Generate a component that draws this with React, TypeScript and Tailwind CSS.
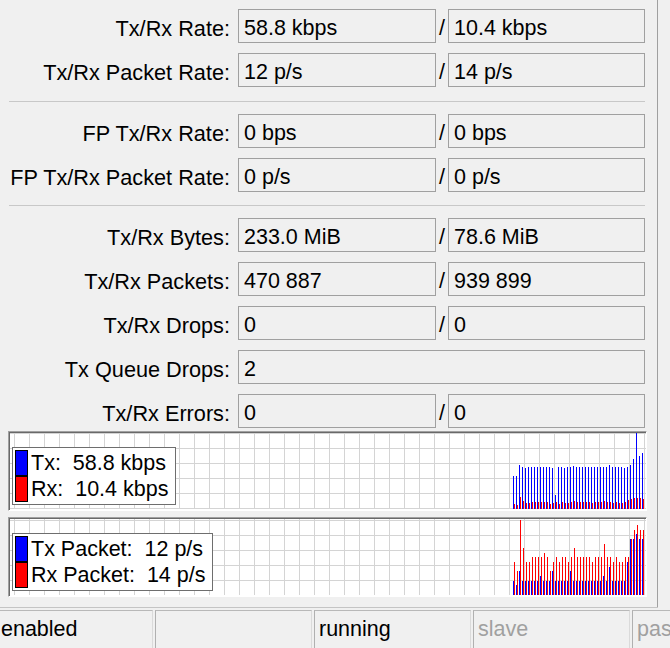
import type { ReactNode } from 'react'

type Row = { label: string; tx: string; rx?: string }

const section1: Row[] = [
  { label: 'Tx/Rx Rate:', tx: '58.8 kbps', rx: '10.4 kbps' },
  { label: 'Tx/Rx Packet Rate:', tx: '12 p/s', rx: '14 p/s' },
]

const section2: Row[] = [
  { label: 'FP Tx/Rx Rate:', tx: '0 bps', rx: '0 bps' },
  { label: 'FP Tx/Rx Packet Rate:', tx: '0 p/s', rx: '0 p/s' },
]

const section3: Row[] = [
  { label: 'Tx/Rx Bytes:', tx: '233.0 MiB', rx: '78.6 MiB' },
  { label: 'Tx/Rx Packets:', tx: '470 887', rx: '939 899' },
  { label: 'Tx/Rx Drops:', tx: '0', rx: '0' },
  { label: 'Tx Queue Drops:', tx: '2' },
  { label: 'Tx/Rx Errors:', tx: '0', rx: '0' },
]

// bar heights in px, one sample every 3px
const rateTx = [33, 33, 44, 42, 41, 42, 42, 42, 42, 42, 42, 42, 42, 41, 14, 42, 42, 41, 42, 42, 43, 42, 42, 42, 42, 42, 42, 42, 42, 42, 42, 42, 44, 42, 42, 42, 42, 41, 42, 44, 50, 76, 53, 56]
const rateRx = [5, 4, 12, 8, 6, 6, 7, 7, 7, 7, 7, 7, 5, 6, 7, 5, 7, 6, 6, 7, 8, 7, 7, 7, 7, 7, 6, 7, 7, 7, 8, 7, 7, 6, 7, 6, 6, 7, 9, 10, 11, 11, 11, 10]
const pktTx = [14, 10, 24, 14, 14, 14, 14, 14, 14, 19, 14, 14, 14, 24, 14, 14, 14, 14, 14, 24, 14, 14, 14, 14, 14, 14, 14, 14, 14, 14, 19, 14, 28, 14, 14, 14, 14, 14, 33, 56, 56, 61, 56, 56]
const pktRx = [33, 24, 75, 47, 33, 33, 38, 38, 38, 38, 42, 38, 24, 33, 38, 33, 38, 38, 33, 38, 47, 38, 38, 38, 38, 38, 33, 38, 38, 38, 51, 38, 38, 33, 38, 33, 33, 38, 38, 56, 65, 70, 65, 65]

function Field({ value, wide }: { value: string; wide?: boolean }) {
  return (
    <div
      className={`${wide ? 'w-[407px]' : 'w-[198px]'} h-[34px] shrink-0 border border-[#a0a0a0] pl-[5px] pt-[6px] flex items-center whitespace-nowrap overflow-hidden`}
    >
      {value}
    </div>
  )
}

function StatRow({ row }: { row: Row }) {
  return (
    <div className="flex items-center h-[34px]">
      <div className="w-[230px] h-[34px] pt-[6px] shrink-0 flex items-center justify-end whitespace-nowrap text-[21.7px]">
        {row.label}
      </div>
      <div className="w-[8px] shrink-0" />
      {row.rx === undefined ? (
        <Field value={row.tx} wide />
      ) : (
        <>
          <Field value={row.tx} />
          <div className="w-[12px] h-[34px] pt-[6px] shrink-0 flex items-center justify-center">/</div>
          <div className="w-[197px] h-[34px] shrink-0 border border-[#a0a0a0] pl-[5px] pt-[6px] flex items-center whitespace-nowrap">
            {row.rx}
          </div>
        </>
      )}
    </div>
  )
}

function Rows({ rows }: { rows: Row[] }) {
  return (
    <div className="flex flex-col gap-[10px]">
      {rows.map((r) => (
        <StatRow key={r.label} row={r} />
      ))}
    </div>
  )
}

function Legend({ children }: { children: ReactNode }) {
  return (
    <div className="absolute left-[2px] top-[14px] border border-[#6e6e6e] bg-white p-[2px] pr-[7px] flex flex-col">
      {children}
    </div>
  )
}

function LegendRow({ color, text }: { color: string; text: string }) {
  return (
    <div className="flex items-center h-[26px]">
      <div className={`w-[13px] h-[26px] border border-black ${color}`} />
      <span className="ml-[3px] pt-[2px] whitespace-pre">{text}</span>
    </div>
  )
}

function Graph({ tx, rx, gridOffset, legend }: { tx: number[]; rx: number[]; gridOffset: number; legend: ReactNode }) {
  const w = 636
  const h = 76
  const vx: number[] = []
  for (let x = 4; x < w; x += 15) vx.push(x)
  const hy: number[] = []
  for (let y = gridOffset; y < h; y += 15) hy.push(y)

  return (
    <div className="ml-[8px] w-[639px] h-[80px] border border-t-[#a0a0a0] border-l-[#a0a0a0] border-r-white border-b-white">
      <div className="relative h-full border-t border-l border-[#696969] bg-white overflow-hidden">
        <svg width={w} height={h} className="block">
          {vx.map((x) => (
            <line key={'v' + x} x1={x + 0.5} x2={x + 0.5} y1={0} y2={h} stroke="#d4d4d4" strokeWidth={1} />
          ))}
          {hy.map((y) => (
            <line key={'h' + y} x1={0} x2={w} y1={y + 0.5} y2={y + 0.5} stroke="#d4d4d4" strokeWidth={1} />
          ))}
          {tx.map((v, i) => (
            <rect key={'t' + i} x={503 + i * 3} y={h - v} width={1} height={v} fill="#0000ff" />
          ))}
          {rx.map((v, i) => (
            <rect key={'r' + i} x={504 + i * 3} y={h - v} width={1} height={v} fill="#ff0000" />
          ))}
        </svg>
        {legend}
      </div>
    </div>
  )
}

function StatusCell({ text, muted }: { text?: string; muted?: boolean }) {
  return (
    <div
      className={`w-[157px] h-[38px] shrink-0 border-l border-t border-r border-l-[#b0b0b0] border-t-[#b8b8b8] border-r-[#dadada] pl-[4px] flex items-center whitespace-nowrap overflow-hidden ${
        muted ? 'text-[#a0a0a0]' : 'text-black'
      }`}
    >
      {text}
    </div>
  )
}

export default function App() {
  return (
    <div className="w-[670px] h-[648px] bg-[#f0f0f0] text-black text-[21.5px] leading-none font-['Liberation_Sans',Arial,sans-serif] overflow-hidden">
      <div className="flex h-[607px]">
        <div className="w-[657px] shrink-0 pt-[9px]">
          <Rows rows={section1} />
          <div className="ml-[9px] w-[636px] h-px bg-[#c8c8c8] mt-[14px] mb-[12px]" />
          <Rows rows={section2} />
          <div className="ml-[9px] w-[636px] h-px bg-[#c8c8c8] mt-[13px] mb-[12px]" />
          <Rows rows={section3} />

          <div className="mt-[3px]">
            <Graph
              tx={rateTx}
              rx={rateRx}
              gridOffset={0}
              legend={
                <Legend>
                  <LegendRow color="bg-[#0000ff]" text="Tx:  58.8 kbps" />
                  <LegendRow color="bg-[#ff0000]" text="Rx:  10.4 kbps" />
                </Legend>
              }
            />
          </div>
          <div className="mt-[6px]">
            <Graph
              tx={pktTx}
              rx={pktRx}
              gridOffset={1}
              legend={
                <Legend>
                  <LegendRow color="bg-[#0000ff]" text="Tx Packet:  12 p/s" />
                  <LegendRow color="bg-[#ff0000]" text="Rx Packet:  14 p/s" />
                </Legend>
              }
            />
          </div>
        </div>
        <div className="w-px bg-[#a0a0a0]" />
      </div>
      <div className="w-[658px] h-px bg-[#c4c4c4]" />

      <div className="flex gap-[2px] ml-[-4px] mt-[2px]">
        <StatusCell text="enabled" />
        <StatusCell />
        <StatusCell text="running" />
        <StatusCell text="slave" muted />
        <StatusCell text="passive" muted />
      </div>
    </div>
  )
}
